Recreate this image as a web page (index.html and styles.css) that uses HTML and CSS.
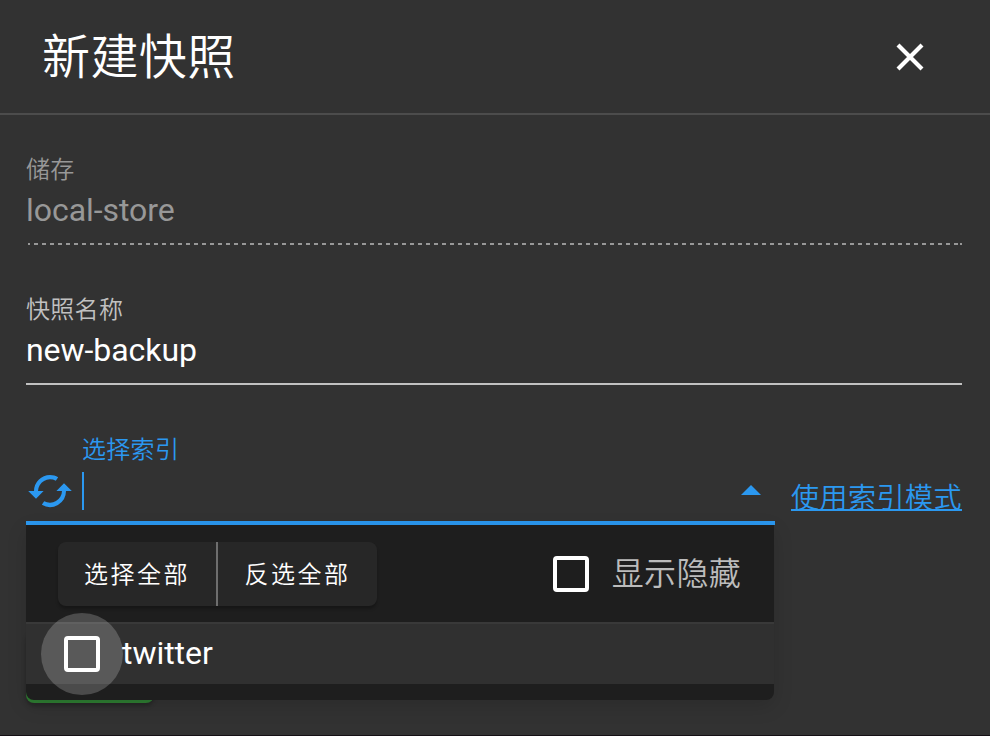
FILE: index.html
```
<!DOCTYPE html>
<html lang="zh-CN">
<head>
<meta charset="utf-8">
<title>新建快照</title>
<link rel="stylesheet" href="styles.css">
</head>
<body>
<main class="dialog">
  <header class="dialog-header">
    <h1 class="title">新建快照</h1>
    <button class="close" aria-label="关闭">
      <svg width="28" height="28" viewBox="0 0 28 28"><path d="M2 2 26 26M26 2 2 26"/></svg>
    </button>
  </header>
  <form class="form">
    <div class="field disabled">
      <div class="label">储存</div>
      <div class="value">local-store</div>
      <div class="rule dashed"></div>
    </div>
    <div class="field">
      <div class="label">快照名称</div>
      <div class="value">new-backup</div>
      <div class="rule"></div>
    </div>
    <div class="index-row">
      <div class="select">
        <div class="select-body">
          <svg class="refresh" width="48" height="48" viewBox="0 0 24 24"><path d="M12 4c1.5 0 2.9.4 4.1 1.1l-1.2 1.8A6 6 0 0 0 6 12h2.8L5 15.9 1.1 12H4A8 8 0 0 1 12 4zM19 8.1l3.9 3.9H20a8 8 0 0 1-12.1 6.9l1.2-1.8A6 6 0 0 0 18 12h-2.8z"/></svg>
          <div class="select-text">
            <div class="label">选择索引</div>
            <div class="caret"></div>
          </div>
          <div class="arrow"></div>
        </div>
        <div class="menu">
          <div class="toolbar">
            <div class="buttons">
              <button type="button">选择全部</button>
              <button type="button">反选全部</button>
            </div>
            <div class="hidden-toggle"><span class="box"></span><span class="toggle-name">显示隐藏</span></div>
          </div>
          <div class="option"><span class="ripple"><span class="box"></span></span><span class="option-name">twitter</span></div>
        </div>
      </div>
      <a class="mode" href="#">使用索引模式</a>
    </div>
    <div class="submit"></div>
  </form>
</main>
</body>
</html>
```
FILE: styles.css
```
* { box-sizing: border-box; }
body {
  margin: 0;
  background: #151015;
  color: #fff;
  font-family: Roboto, "Noto Sans CJK SC", sans-serif;
  font-size: 32px;
  letter-spacing: 0.3px;
  overflow: hidden;
}
.dialog { height: 735px; background: #323232; }
.dialog-header {
  display: flex;
  align-items: center;
  justify-content: space-between;
  height: 115px;
  padding: 0 66px 0 42px;
  border-bottom: 2px solid #4c4c4c;
}
.title { margin: 0; padding-top: 2px; font-size: 48px; font-weight: 350; line-height: 64px; letter-spacing: 0.4px; }
.close { display: flex; padding: 0; border: 0; background: none; }
.close path { fill: none; stroke: #fff; stroke-width: 4.2; }
.form { padding: 38px 28px 0 26px; }
.field { height: 140px; }
.label { height: 32px; font-size: 24px; font-weight: 350; line-height: 34px; color: #c1c1c1; }
.value { height: 60px; line-height: 50px; letter-spacing: -0.05px; }
.rule { height: 2px; margin-top: -2px; background: #c1c1c1; }
.disabled .label, .disabled .value { color: #989898; }
.rule.dashed { margin-left: 2px; background: repeating-linear-gradient(90deg, #989898 0 4px, transparent 4px 8px) -2px 0; }
.index-row { display: flex; height: 92px; }
.select { position: relative; width: 749px; height: 92px; border-bottom: 4px solid #2b98f0; }
.select-body { display: flex; }
.refresh { margin-top: 34px; fill: #2b98f0; }
.select-text { flex: 1; padding-left: 8px; }
.select .label { color: #2b98f0; }
.caret { width: 2px; height: 38px; margin-top: 7px; background: #2b98f0; }
.arrow {
  width: 20px;
  height: 10px;
  margin: 52px 14px 0 0;
  background: #2b98f0;
  clip-path: polygon(50% 0, 100% 100%, 0 100%);
}
.mode {
  margin: 45px 0 0 16px;
  font-size: 28px;
  font-weight: 350;
  line-height: 42px;
  letter-spacing: 0.5px;
  color: #2b98f0;
  white-space: nowrap;
  text-decoration-thickness: 2px;
}
.menu {
  position: absolute;
  z-index: 1;
  top: 92px;
  left: 0;
  width: 748px;
  height: 175px;
  border-radius: 0 0 8px 8px;
  background: #1e1e1e;
  box-shadow: 0 6px 20px rgba(0, 0, 0, .14);
}
.toolbar {
  display: flex;
  align-items: center;
  justify-content: space-between;
  height: 99px;
  padding: 0 33px 0 32px;
  border-bottom: 2px solid #393939;
}
.buttons { display: flex; border-radius: 8px; background: #272727; box-shadow: 0 3px 3px rgba(0, 0, 0, .25); }
.buttons button {
  width: 158px;
  height: 64px;
  padding: 2px 0 0;
  border: 0;
  background: none;
  color: #fff;
  font: 350 24px/62px Roboto, "Noto Sans CJK SC", sans-serif;
  letter-spacing: 2.5px;
}
.buttons button + button { width: 161px; border-left: 2px solid #6e6e6e; }
.hidden-toggle { display: flex; align-items: center; gap: 23px; font-weight: 350; color: #bcbcbc; }
.toggle-name { padding-bottom: 6px; }
.box { flex: none; width: 36px; height: 36px; border: 4px solid #fff; border-radius: 4px; }
.option { display: flex; align-items: center; height: 60px; padding-left: 15px; background: #303030; }
.ripple {
  display: flex;
  align-items: center;
  justify-content: center;
  width: 82px;
  height: 82px;
  border-radius: 50%;
  background: rgba(255, 255, 255, .2);
}
.option-name { margin-left: -1px; padding-bottom: 2px; letter-spacing: -0.05px; }
.submit { width: 128px; height: 72px; margin-top: 106px; border-radius: 8px; background: #2e7d32; box-shadow: 0 3px 4px rgba(0, 0, 0, .25); }
```
